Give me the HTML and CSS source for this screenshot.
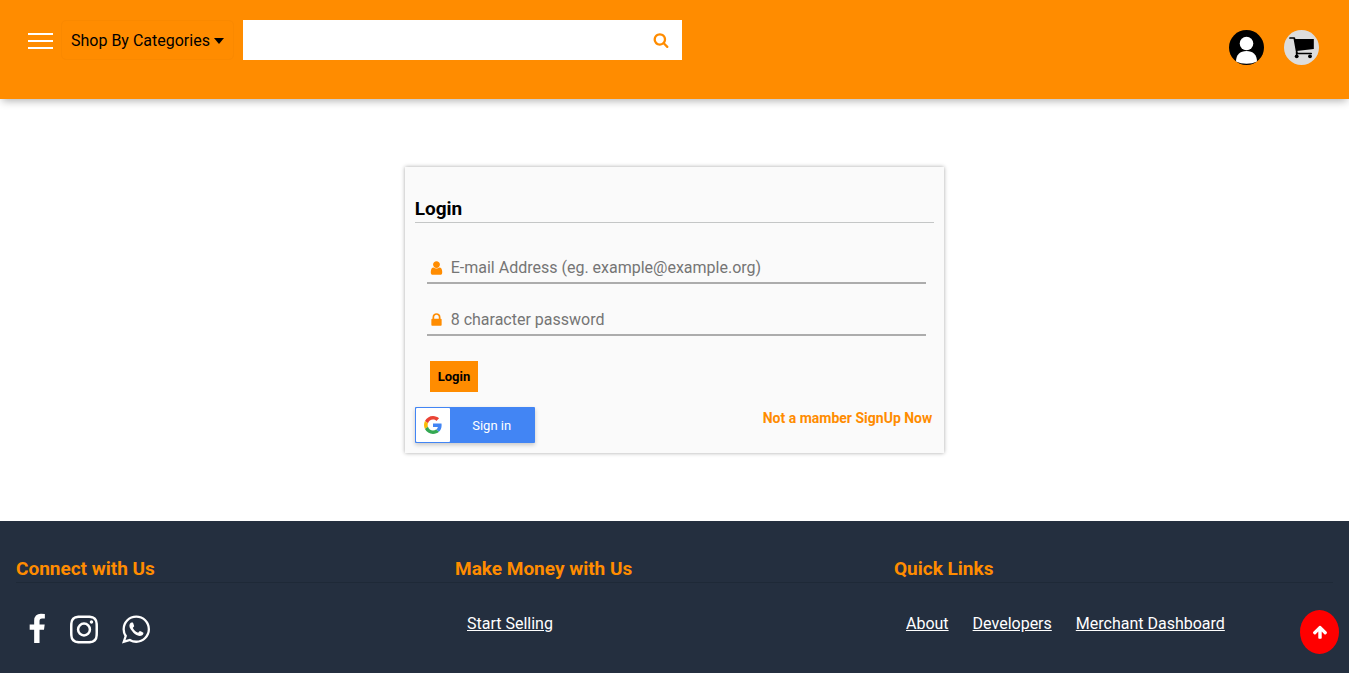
FILE: index.html
```html
<!DOCTYPE html>
<html lang="en">
<head>
<meta charset="utf-8">
<meta name="viewport" content="width=device-width, initial-scale=1">
<title>Login</title>
<link rel="stylesheet" href="styles.css">
</head>
<body>
<header class="topbar">
  <button class="menu-button" type="button" aria-label="Open menu"><span></span><span></span><span></span></button>
  <button class="categories" type="button">Shop By Categories<span class="caret"></span></button>
  <form class="search" role="search">
    <input class="search-input" type="text" aria-label="Search products">
    <button class="search-button" type="button" aria-label="Search">
      <svg viewBox="0 0 1792 1792" width="16" height="16"><path d="M1216 832q0-185-131.500-316.500t-316.500-131.500-316.500 131.500-131.500 316.500 131.500 316.500 316.500 131.500 316.500-131.500 131.500-316.500zm512 832q0 52-38 90t-90 38q-54 0-90-38l-343-342q-179 124-399 124-143 0-273.500-55.500t-225-150-150-225-55.500-273.500 55.500-273.500 150-225 225-150 273.500-55.500 273.500 55.500 225 150 150 225 55.500 273.500q0 220-124 399l343 343q37 37 37 90z"/></svg>
    </button>
  </form>
  <nav class="account">
    <a href="#" aria-label="Account">
      <svg viewBox="0 0 35 35" width="35" height="35"><circle cx="17.500" cy="17.500" r="17.500" fill="#000"/><circle cx="17.500" cy="13.500" r="6.800" fill="#fff"/><path d="M7 31.500C7 25 11 21 17.500 21S28 25 28 31.500Q23.500 33.800 17.500 33.800T7 31.500z" fill="#fff"/></svg>
    </a>
    <a href="#" aria-label="Shopping cart">
      <svg viewBox="0 0 35 35" width="35" height="35"><circle cx="17.500" cy="17.500" r="17.500" fill="#ddd"/><path d="M6 8h4.300l2.400 13.500v2h14.500" fill="none" stroke="#000" stroke-width="1.700" stroke-linejoin="round" stroke-linecap="round"/><path d="M10.500 9h19.300v10l-17.300 2z"/><path d="M12.700 22v4" stroke="#000" stroke-width="1.600"/><circle cx="12.700" cy="26.300" r="1.900"/><circle cx="26" cy="26.300" r="1.900"/></svg>
    </a>
  </nav>
</header>

<main class="content">
  <section class="card">
    <h1 class="title">Login</h1>
    <form class="login-form">
      <div class="field">
        <label for="email" aria-label="E-mail Address"><svg viewBox="192 0 1408 1792" width="13" height="16"><path d="M1536 1399q0 109-62.500 187t-150.500 78h-854q-88 0-150.500-78t-62.500-187q0-85 8.500-160.500t31.500-152 58.500-131 94-89 134.500-34.500q131 128 313 128t313-128q76 0 134.500 34.500t94 89 58.500 131 31.500 152 8.500 160.500zm-256-887q0 159-112.500 271.500t-271.500 112.500-271.500-112.500-112.500-271.500 112.500-271.500 271.500-112.500 271.500 112.500 112.500 271.500z"/></svg></label>
        <input id="email" type="email" placeholder="E-mail Address (eg. example@example.org)">
      </div>
      <div class="field">
        <label for="password" aria-label="Password"><svg viewBox="192 0 1408 1792" width="13" height="16"><path d="M640 768h512v-192q0-106-75-181t-181-75-181 75-75 181v192zm832 96v576q0 40-28 68t-68 28h-960q-40 0-68-28t-28-68v-576q0-40 28-68t68-28h32v-192q0-184 132-316t316-132 316 132 132 316v192h32q40 0 68 28t28 68z"/></svg></label>
        <input id="password" type="password" placeholder="8 character password">
      </div>
      <button class="submit" type="button">Login</button>
    </form>
    <div class="alternatives">
      <button class="google" type="button">
        <span class="google-logo"><svg viewBox="0 0 48 48" width="18" height="18"><path fill="#EA4335" d="M24 9.500c3.540 0 6.710 1.220 9.210 3.600l6.850-6.850C35.900 2.380 30.470 0 24 0 14.620 0 6.510 5.380 2.560 13.220l7.980 6.190C12.430 13.720 17.740 9.500 24 9.500z"/><path fill="#4285F4" d="M46.980 24.550c0-1.570-.15-3.090-.38-4.550H24v9.020h12.940c-.58 2.960-2.260 5.480-4.780 7.180l7.730 6c4.510-4.180 7.090-10.360 7.090-17.650z"/><path fill="#FBBC05" d="M10.530 28.590c-.48-1.450-.76-2.990-.76-4.590s.27-3.140.76-4.590l-7.980-6.190C.92 16.460 0 20.120 0 24c0 3.880.92 7.540 2.560 10.780l7.970-6.190z"/><path fill="#34A853" d="M24 48c6.480 0 11.930-2.130 15.890-5.810l-7.730-6c-2.150 1.450-4.920 2.300-8.160 2.300-6.260 0-11.570-4.220-13.470-9.910l-7.980 6.190C6.510 42.620 14.620 48 24 48z"/></svg></span>
        <span class="google-text">Sign in</span>
      </button>
      <a class="signup" href="#">Not a mamber SignUp Now</a>
    </div>
  </section>
</main>

<footer class="footer">
  <section>
    <h2 class="title">Connect with Us</h2>
    <div class="links">
      <a href="#" aria-label="Facebook"><svg viewBox="384 0 1024 1792" width="18" height="33"><path d="M1343 12v264h-157q-86 0-116 36t-30 108v189h293l-39 296h-254v759h-306v-759h-255v-296h255v-218q0-186 104-288.500t277-102.500q147 0 228 12z"/></svg></a>
      <a href="#" aria-label="Instagram"><svg viewBox="128 0 1536 1792" width="28" height="33"><path d="M1152 896q0-106-75-181t-181-75-181 75-75 181 75 181 181 75 181-75 75-181zm138 0q0 164-115 279t-279 115-279-115-115-279 115-279 279-115 279 115 115 279zm108-410q0 38-27 65t-65 27-65-27-27-65 27-65 65-27 65 27 27 65zm-502-220q-7 0-76.500-.5t-105.500 0-96.500 3-103 10-71.500 18.500q-50 20-88 58t-58 88q-11 29-18.500 71.500t-10 103-3 96.500 0 105.500.5 76.500-.5 76.500 0 105.500 3 96.500 10 103 18.500 71.500q20 50 58 88t88 58q29 11 71.500 18.500t103 10 96.500 3 105.500 0 76.500-.5 76.500.5 105.500 0 96.500-3 103-10 71.500-18.500q50-20 88-58t58-88q11-29 18.500-71.500t10-103 3-96.500 0-105.500-.5-76.500.5-76.500 0-105.500-3-96.500-10-103-18.500-71.500q-20-50-58-88t-88-58q-29-11-71.500-18.500t-103-10-96.500-3-105.500 0-76.500.5zm768 630q0 229-5 317-10 208-124 322t-322 124q-88 5-317 5t-317-5q-208-10-322-124t-124-322q-5-88-5-317t5-317q10-208 124-322t322-124q88-5 317-5t317 5q208 10 322 124t124 322q5 88 5 317z"/></svg></a>
      <a href="#" aria-label="WhatsApp"><svg viewBox="128 0 1536 1792" width="28" height="33"><path d="M1113 974q13 0 97.500 44t89.500 53q2 5 2 15 0 33-17 76-16 39-71 65.500t-102 26.500q-57 0-190-62-98-45-170-118t-148-185q-72-107-71-194v-8q3-91 74-158 24-22 52-22 6 0 18 1.500t19 1.500q19 0 26.500 6.500t15.500 27.500q8 20 33 88t25 75q0 21-34.500 57.500t-34.500 46.500q0 7 5 15 34 73 102 137 56 53 151 101 12 7 22 7 15 0 54-48.500t52-48.500zm-203 530q127 0 243.500-50t200.500-134 134-200.500 50-243.500-50-243.500-134-200.500-200.500-134-243.500-50-243.500 50-200.500 134-134 200.500-50 243.500q0 203 120 368l-79 233 242-77q158 104 345 104zm0-1382q153 0 292.500 60t240.500 161 161 240.500 60 292.500-60 292.500-161 240.500-240.500 161-292.500 60q-195 0-365-94l-417 134 136-405q-108-178-108-389 0-153 60-292.500t161-240.500 240.500-161 292.500-60z"/></svg></a>
    </div>
  </section>
  <section>
    <h2 class="title">Make Money with Us</h2>
    <div class="links"><a href="#">Start Selling</a></div>
  </section>
  <section>
    <h2 class="title">Quick Links</h2>
    <div class="links"><a href="#">About</a><a href="#">Developers</a><a href="#">Merchant Dashboard</a></div>
  </section>
</footer>
<button class="to-top" type="button" aria-label="Back to top"><svg viewBox="0 0 1792 1792" width="16" height="16"><path d="M1675 971q0 51-37 90l-75 75q-38 38-91 38-54 0-90-38l-294-293v704q0 52-37.500 84.500t-90.500 32.500h-128q-53 0-90.500-32.500t-37.500-84.500v-704l-294 293q-36 38-90 38t-90-38l-75-75q-38-38-38-90 0-53 38-91l651-651q35-37 90-37 54 0 91 37l651 651q37 39 37 91z"/></svg></button>
</body>
</html>
```
FILE: styles.css
```css
* { box-sizing: border-box; }
body {
  display: flex;
  flex-direction: column;
  min-height: 100vh;
  margin: 0;
  background: #fff;
  color: #000;
  font: 16px/20px Roboto, sans-serif;
}
button, input { font: inherit; }
button { padding: 0; border: 0; cursor: pointer; }
svg { display: block; fill: currentColor; }

.topbar {
  display: flex;
  align-items: flex-start;
  padding: 20px 30px 34px 28px;
  background: #ff8c00;
  box-shadow: 0 4px 8px -2px rgba(0, 0, 0, .3);
}
.menu-button {
  display: flex;
  flex-direction: column;
  gap: 5px;
  width: 25px;
  margin: 13px 8px 0 0;
  background: none;
}
.menu-button span { height: 2px; background: #fff; }
.categories {
  display: flex;
  align-items: center;
  gap: 4px;
  height: 40px;
  margin-right: 9px;
  padding: 1px 9px 0;
  border: 1px solid #fa8900;
  border-radius: 5px;
  background: none;
  color: #000;
}
.caret {
  border: 5px solid transparent;
  border-top: 6px solid #000;
  border-bottom: 0;
}
.search { display: flex; width: 34%; height: 40px; background: #fff; }
.search-input { flex: 1; min-width: 0; padding: 0 10px; border: 0; background: none; }
.search-button { padding: 0 13px; background: none; color: #ff8c00; }
.account { display: flex; gap: 20px; margin: 10px 0 0 auto; }
.account a { color: #000; }

.content { flex: 1; padding: 68px 0 67px; }
.card {
  width: 40%;
  margin: 0 auto;
  padding: 31px 10px 10px;
  background: #fafafa;
  box-shadow: 0 0 4px rgba(0, 0, 0, .35);
}
.title {
  margin: 0;
  padding-bottom: 3px;
  border-bottom: 1px solid #c4c6c6;
  font-size: 19px;
  line-height: 21px;
  font-weight: 700;
}
.login-form { padding: 28px 8px 15px 12px; }
.field {
  display: flex;
  align-items: center;
  gap: 8px;
  height: 33px;
  margin-bottom: 19px;
  padding: 2px 0 0 3px;
  border-bottom: 2px solid #acacac;
}
.field label { color: #ff8c00; }
.field input { flex: 1; min-width: 0; padding: 0; border: 0; background: none; }
.field input::placeholder { color: #757575; }
.submit {
  height: 31px;
  margin: 6px 0 0 3px;
  padding: 1px 8px 0;
  background: #ff8c00;
  color: #000;
  font-size: 13px;
  font-weight: 700;
}
.alternatives { display: flex; justify-content: space-between; align-items: flex-start; }
.google {
  display: flex;
  width: 120px;
  height: 36px;
  padding: 1px;
  border-radius: 1px;
  background: #4285f4;
  box-shadow: 0 2px 4px rgba(0, 0, 0, .2);
  color: #fff;
}
.google-logo { display: grid; place-items: center; width: 34px; height: 34px; background: #fff; border-radius: 1px; }
.google-text { flex: 1; font-size: 13px; line-height: 36px; }
.signup {
  margin: 1px 2px 0 0;
  color: #ff8c00;
  font-size: 14px;
  font-weight: 700;
  text-decoration: none;
}

.footer {
  display: grid;
  grid-template-columns: repeat(3, 1fr);
  padding: 37px 16px 27px;
  background: #242f3f;
}
.footer .title { border-color: #1e2937; color: #ff8c00; }
.links { display: flex; gap: 24px; padding: 30px 12px 0; line-height: 22px; }
.links a { color: #fff; }
.to-top {
  position: fixed;
  right: 10px;
  bottom: 19px;
  display: grid;
  place-items: center;
  width: 39px;
  height: 44px;
  border-radius: 50%;
  background: #f00;
  color: #fff;
}
```
